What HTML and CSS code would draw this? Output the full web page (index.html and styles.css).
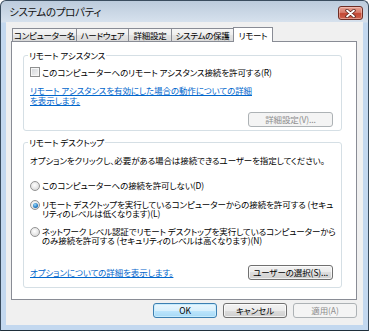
FILE: index.html
```html
<!DOCTYPE html>
<html lang="ja">
<head>
<meta charset="utf-8">
<title>システムのプロパティ</title>
<link rel="stylesheet" href="styles.css">
</head>
<body>
<div class="window">
  <div class="titlebar">
    <span class="title">システムのプロパティ</span>
    <button class="close" aria-label="閉じる">
      <svg width="11" height="9" viewBox="0 0 11 9">
        <path d="M2 1.5 L9 7.5 M9 1.5 L2 7.5" stroke="#5b231b" stroke-width="3.4" stroke-linecap="round"/>
        <path d="M2 1.5 L9 7.5 M9 1.5 L2 7.5" stroke="#ffffff" stroke-width="1.8" stroke-linecap="round"/>
      </svg>
    </button>
  </div>
  <div class="client">
    <div class="tabs">
      <div class="tab t1">コンピューター名</div>
      <div class="tab t2">ハードウェア</div>
      <div class="tab t3">詳細設定</div>
      <div class="tab t4">システムの保護</div>
      <div class="tab t5 active">リモート</div>
    </div>
    <div class="panel">
      <fieldset class="group g1">
        <legend>リモート アシスタンス</legend>
        <label class="option check"><span class="box"></span><span class="label">このコンピューターへのリモート アシスタンス接続を許可する(R)</span></label>
        <a class="link l1" href="#">リモート アシスタンスを有効にした場合の動作についての詳細<br>を表示します。</a>
        <div class="right"><button class="btn wide disabled">詳細設定(V)...</button></div>
      </fieldset>
      <fieldset class="group g2">
        <legend>リモート デスクトップ</legend>
        <p class="desc">オプションをクリックし、必要がある場合は接続できるユーザーを指定してください。</p>
        <div class="radios">
          <label class="option radio"><span class="dot"></span><span class="label">このコンピューターへの接続を許可しない(D)</span></label>
          <label class="option radio checked"><span class="dot"></span><span class="label">リモート デスクトップを実行しているコンピューターからの接続を許可する (セキュ<br>リティのレベルは低くなります)(L)</span></label>
          <label class="option radio"><span class="dot"></span><span class="label">ネットワーク レベル認証でリモート デスクトップを実行しているコンピューターから<br>のみ接続を許可する (セキュリティのレベルは高くなります)(N)</span></label>
        </div>
        <div class="row">
          <a class="link" href="#">オプションについての詳細を表示します。</a>
          <button class="btn wide">ユーザーの選択(S)...</button>
        </div>
      </fieldset>
    </div>
    <div class="buttons">
      <button class="btn default">OK</button>
      <button class="btn">キャンセル</button>
      <button class="btn disabled">適用(A)</button>
    </div>
  </div>
</div>
</body>
</html>
```

FILE: styles.css
```css
* { box-sizing: border-box; }
html, body { margin: 0; padding: 0; }
body {
  width: 369px;
  height: 331px;
  overflow: hidden;
  background: #ffffff;
  font-family: "Noto Sans CJK JP", "Noto Sans", sans-serif;
  font-size: 8.5px;
  letter-spacing: -0.1px;
  font-feature-settings: "palt";
  color: #000;
}
.window {
  width: 369px;
  height: 331px;
  border: 1px solid #3a4c5e;
  border-bottom-color: #1f2f3b;
  border-radius: 6px 6px 0 0;
  background: linear-gradient(to bottom, #bccbdc 0, #d6e1ed 21px, #c3d8ef 22px, #c3d8ef 100%);
  padding: 0 5px 5px;
  display: flex;
  flex-direction: column;
}
.titlebar {
  height: 21px;
  display: flex;
  justify-content: space-between;
  align-items: center;
  padding-left: 3px;
}
.title {
  font-size: 10.5px;
  letter-spacing: -0.3px;
  line-height: 14px;
  color: #111;
}
.close {
  align-self: flex-start;
  margin-top: 5px;
  width: 25px;
  height: 14px;
  padding: 0;
  border: 1px solid #6e2e25;
  border-radius: 3px;
  background: linear-gradient(to bottom, #e8a394 0, #d77b6b 45%, #c24733 55%, #cf6450 100%);
  box-shadow: inset 0 0 0 1px rgba(255, 220, 210, 0.45);
  display: flex;
  align-items: center;
  justify-content: center;
}
.close svg { display: block; }
.client {
  flex: 1;
  min-height: 0;
  background: #f0f0f0;
  padding: 5px 6px 0 5px;
  display: flex;
  flex-direction: column;
}
.tabs {
  height: 14px;
  flex: none;
  display: flex;
  align-items: flex-end;
  padding-left: 1px;
  position: relative;
  z-index: 1;
}
.tab {
  height: 13px;
  border: 1px solid #898c95;
  border-bottom: none;
  margin-left: -1px;
  background: linear-gradient(to bottom, #f6f6f6 0, #eeeeee 50%, #e4e4e4 50%, #dadada 100%);
  text-align: center;
  line-height: 12px;
  white-space: nowrap;
  letter-spacing: -0.3px;
}
.tab:first-child { margin-left: 0; }
.t1 { width: 65px; }
.t2 { width: 53px; }
.t3 { width: 44px; }
.t4 { width: 63px; }
.t5 { width: 40px; }
.tab.active {
  height: 15px;
  margin-bottom: -1px;
  background: #ffffff;
  line-height: 14px;
}
.panel {
  flex: 1;
  min-height: 0;
  background: #ffffff;
  border: 1px solid #898c95;
  padding: 8px 14px 0 11px;
}
.group {
  margin: 0;
  min-width: 0;
  border: 1px solid #d5dfe5;
  border-radius: 3px;
  padding: 6px 8px 3px 6px;
}
.group legend {
  padding: 0 1px;
  margin-left: -2px;
  line-height: 11px;
}
.g2 {
  margin-top: 6px;
  padding-bottom: 7px;
  padding-top: 7px;
}
.option {
  display: flex;
  align-items: flex-start;
  white-space: nowrap;
}
.check { line-height: 11px; }
.box {
  flex: none;
  width: 10px;
  height: 10px;
  margin: 0 2px 0 0;
  border: 1px solid #8e8f8f;
  background: linear-gradient(135deg, #d2d5d9 0, #f5f5f5 100%);
  box-shadow: inset 0 0 0 1px #f6f6f6;
}
.link {
  display: block;
  color: #0066cc;
  text-decoration: underline;
  line-height: 10px;
  white-space: nowrap;
}
.l1 { margin-top: 7px; }
.right {
  display: flex;
  justify-content: flex-end;
  margin-top: 7px;
}
.btn {
  font-family: inherit;
  font-size: 8.5px;
  letter-spacing: -0.1px;
  font-feature-settings: "palt";
  color: #000;
  height: 15px;
  width: 64px;
  padding: 0;
  line-height: 13px;
  border: 1px solid #707070;
  border-radius: 3px;
  background: linear-gradient(to bottom, #f2f2f2 0, #ebebeb 50%, #dddddd 50%, #cfcfcf 100%);
  box-shadow: inset 0 0 0 1px rgba(255, 255, 255, 0.7);
}
.btn.wide { width: 85px; }
.btn.disabled {
  color: #8d8d8d;
  border-color: #adb2b5;
  background: #f4f4f4;
  box-shadow: none;
}
.btn.default {
  border-color: #3c7fb1;
  background: linear-gradient(to bottom, #eaf6fd 0, #d9f0fc 50%, #bee6fd 50%, #a7d9f5 100%);
  box-shadow: inset 0 0 0 1px #c8ecfd;
}
.desc {
  margin: 0;
  line-height: 11px;
  white-space: nowrap;
}
.radios {
  margin-top: 15px;
  display: flex;
  flex-direction: column;
  gap: 9px;
}
.radio { line-height: 9px; }
.dot {
  flex: none;
  width: 10px;
  height: 10px;
  margin: 0 2px 0 0;
  border-radius: 50%;
  border: 1px solid #939393;
  background: radial-gradient(circle at 45% 40%, #ffffff 0, #eaeaea 45%, #cfcfcf 100%);
  display: flex;
  align-items: center;
  justify-content: center;
}
.radio.checked .dot::after {
  content: "";
  width: 5px;
  height: 5px;
  border-radius: 50%;
  background: radial-gradient(circle at 40% 35%, #9adaf9 0, #2a7fc6 55%, #0d4f92 100%);
}
.row {
  margin-top: 20px;
  display: flex;
  justify-content: space-between;
  align-items: center;
}
.row .link { line-height: 11px; }
.buttons {
  flex: none;
  margin: 3px 0 7px;
  display: flex;
  justify-content: flex-end;
  gap: 6px;
}
```
